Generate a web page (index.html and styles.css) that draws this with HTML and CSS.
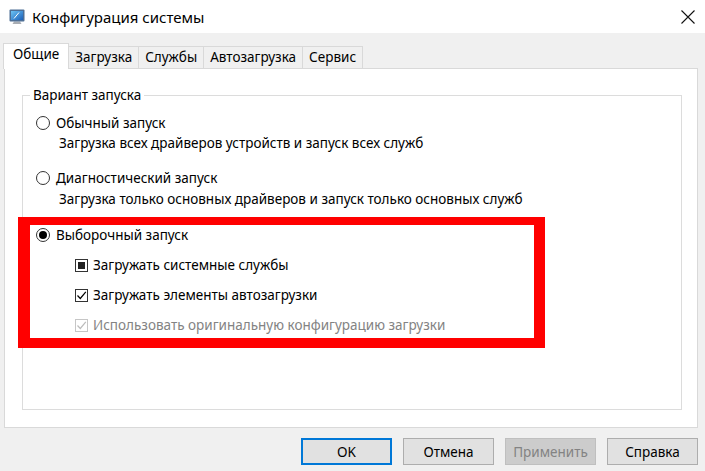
FILE: index.html
```html
<!DOCTYPE html>
<html lang="ru">

<head>
    <meta charset="UTF-8">
    <meta name="viewport" content="width=device-width, initial-scale=1.0">
    <title>Конфигурация системы</title>
    <link rel="stylesheet" href="styles.css">
</head>

<body>
    <div class="window">
        <div class="titlebar">
            <svg class="app-icon" viewBox="0 0 16 16">
                <defs>
                    <linearGradient id="scr" x1="0" y1="0" x2="1" y2="1">
                        <stop offset="0" stop-color="#6cc4f5" />
                        <stop offset="1" stop-color="#1b5fb8" />
                    </linearGradient>
                </defs>
                <path d="M5 12.5h6l1.5 2.5h-9z" fill="#a9adb3" />
                <rect x="0.5" y="0.5" width="15" height="12" rx="1" fill="#4d6f96" />
                <rect x="2" y="2" width="12" height="9" fill="url(#scr)" />
                <path d="M5 9.5l5-6" stroke="#fff" stroke-width="1" />
            </svg>
            <span class="title">Конфигурация системы</span>
            <svg class="close" viewBox="0 0 14 14">
                <path d="M0.5 0.5l13 13M13.5 0.5l-13 13" stroke="#111" stroke-width="1.1" />
            </svg>
        </div>

        <div class="main">
            <div class="tabs">
                <div class="tab active">Общие</div>
                <div class="tab">Загрузка</div>
                <div class="tab">Службы</div>
                <div class="tab">Автозагрузка</div>
                <div class="tab">Сервис</div>
            </div>

            <div class="panel">
                <fieldset class="group">
                    <legend>Вариант запуска</legend>

                    <div class="option first"><span class="radio"></span>Обычный запуск</div>
                    <div class="desc">Загрузка всех драйверов устройств и запуск всех служб</div>

                    <div class="option second"><span class="radio"></span>Диагностический запуск</div>
                    <div class="desc">Загрузка только основных драйверов и запуск только основных служб</div>

                    <div class="highlight">
                        <div class="option"><span class="radio checked"></span>Выборочный запуск</div>
                        <div class="sub"><span class="check mixed"></span>Загружать системные службы</div>
                        <div class="sub">
                            <span class="check">
                                <svg viewBox="0 0 11 11"><path d="M1.5 5.5l2.8 3L9.8 1.8" /></svg>
                            </span>Загружать элементы автозагрузки
                        </div>
                        <div class="sub disabled">
                            <span class="check">
                                <svg viewBox="0 0 11 11"><path d="M1.5 5.5l2.8 3L9.8 1.8" /></svg>
                            </span>Использовать оригинальную конфигурацию загрузки
                        </div>
                    </div>
                </fieldset>
            </div>

            <div class="buttons">
                <button class="btn default">OK</button>
                <button class="btn">Отмена</button>
                <button class="btn" disabled>Применить</button>
                <button class="btn">Справка</button>
            </div>
        </div>
    </div>
</body>

</html>
```

FILE: styles.css
```css
* {
    box-sizing: border-box;
}

body {
    margin: 0;
    background-color: #f0f0f0;
    font-family: "Noto Sans", "DejaVu Sans", sans-serif;
    font-size: 13.5px;
    color: #000;
}

.window {
    width: 705px;
    height: 471px;
    display: flex;
    flex-direction: column;
}

/* title bar */
.titlebar {
    height: 33px;
    background-color: #fff;
    display: flex;
    align-items: center;
    padding: 0 10px 0 9px;
}

.app-icon {
    width: 16px;
    height: 16px;
}

.title {
    flex: 1;
    margin-left: 7px;
    font-size: 15px;
}

.close {
    width: 14px;
    height: 14px;
}

.main {
    padding: 10px 7px 0 4px;
}

/* tabs */
.tabs {
    display: flex;
    align-items: flex-start;
    height: 25px;
    margin-left: -1px;
}

.tab {
    height: 22px;
    margin-top: 3px;
    line-height: 20px;
    padding: 0 6px;
    border: 1px solid #d9d9d9;
    border-bottom: none;
    background-color: #f0f0f0;
    margin-right: -1px;
}

.tab.active {
    height: 26px;
    margin-top: 0;
    padding: 0 9px;
    background-color: #fff;
    position: relative;
    z-index: 1;
}

.panel {
    height: 360px;
    background-color: #fff;
    border: 1px solid #d9d9d9;
}

.group {
    height: 324px;
    margin: 17px 15px 0 17px;
    padding: 0 0 0 13px;
    border: 1px solid #dcdcdc;
}

.group legend {
    margin-left: -6px;
    padding: 0 3px;
    line-height: 18px;
}

.option,
.sub {
    display: flex;
    align-items: center;
    height: 20px;
    white-space: nowrap;
}

.option.first {
    margin-top: 9px;
}

.option.second {
    margin-top: 15px;
}

.desc {
    height: 20px;
    line-height: 20px;
    padding-left: 23px;
    margin-top: 0;
}

.option.second + .desc {
    margin-top: 1px;
}

.radio {
    width: 14px;
    height: 14px;
    margin-right: 6px;
    border: 1px solid #333;
    border-radius: 50%;
    display: flex;
    align-items: center;
    justify-content: center;
}

.radio.checked::after {
    content: "";
    width: 8px;
    height: 8px;
    border-radius: 50%;
    background-color: #000;
}

/* the red frame around the custom startup block */
.highlight {
    width: 527px;
    margin: 8px 0 0 -18px;
    padding: 0 0 3px 6px;
    border-style: solid;
    border-color: #ff0000;
    border-width: 8px 11px 10px 12px;
}

.sub {
    margin-top: 10px;
    padding-left: 39px;
}

.check {
    width: 13px;
    height: 13px;
    margin-right: 5px;
    border: 1px solid #333;
    display: flex;
    align-items: center;
    justify-content: center;
}

.check svg {
    width: 11px;
    height: 11px;
}

.check path {
    fill: none;
    stroke: #000;
    stroke-width: 1.2;
}

.check.mixed::after {
    content: "";
    width: 7px;
    height: 7px;
    background-color: #222;
}

.sub.disabled {
    color: #838383;
}

.sub.disabled .check {
    border-color: #c6c6c6;
}

.sub.disabled .check path {
    stroke: #bcbcbc;
}

/* bottom buttons */
.buttons {
    display: flex;
    justify-content: flex-end;
    gap: 11px;
    margin-top: 10px;
}

.btn {
    width: 91px;
    height: 27px;
    padding: 0;
    background-color: #e1e1e1;
    border: 1px solid #adadad;
    font-family: inherit;
    font-size: 13.5px;
    color: #000;
}

.btn.default {
    border: 2px solid #0078d7;
}

.btn:disabled {
    background-color: #cccccc;
    border-color: #bfbfbf;
    color: #838383;
}
```
